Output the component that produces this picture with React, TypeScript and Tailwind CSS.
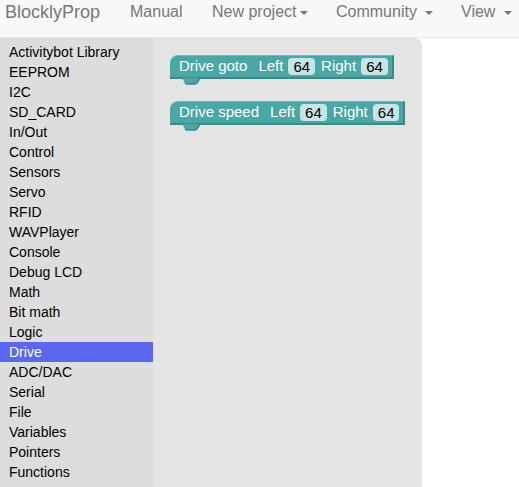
import React from "react";

const items = [
  "Activitybot Library","EEPROM","I2C","SD_CARD","In/Out","Control","Sensors","Servo","RFID","WAVPlayer","Console","Debug LCD","Math","Bit math","Logic","Drive","ADC/DAC","Serial","File","Variables","Pointers","Functions",
];

function Caret() {
  return <span className="inline-block ml-[4px] align-middle w-0 h-0 border-l-[4px] border-r-[4px] border-t-[4px] border-l-transparent border-r-transparent border-t-[#777]" />;
}

function Field({ v }: { v: string }) {
  return (
    <span className="h-[17px] px-[5px] rounded-[4px] bg-[#c7e5e4] text-black flex items-center leading-none">{v}</span>
  );
}

function Block({ name, width }: { name: string; width: number }) {
  return (
    <div className="relative" style={{ width }}>
      <div className="h-[24px] bg-[#49a8a5] rounded-tl-[8px] border-r-[2px] border-b-[2px] border-[#3a8986] border-t border-t-[#6dbab8] flex items-center pl-[9px] text-white text-[15px] whitespace-nowrap">
        <span>{name}</span>
        <span className="ml-[11px]">Left</span>
        <span className="ml-[5px]"><Field v="64" /></span>
        <span className="ml-[6px]">Right</span>
        <span className="ml-[5px]"><Field v="64" /></span>
      </div>
      <svg className="absolute left-[12px] top-[23px]" width="18" height="7" viewBox="0 0 18 7">
        <path d="M0 0 L3 5 Q4 6 6 6 L12 6 Q14 6 15 5 L18 0 Z" fill="#49a8a5" />
        <path d="M3 5 Q4 6 6 6 L12 6 Q14 6 15 5 L18 0" fill="none" stroke="#3a8986" strokeWidth="1.5" />
      </svg>
    </div>
  );
}

export default function App() {
  return (
    <div className="w-[519px] h-[487px] overflow-hidden bg-white" style={{ fontFamily: '"Liberation Sans", Arial, sans-serif' }}>
      <div className="h-[38px] bg-[#f8f8f8] border-b border-[#e7e7e7] flex items-start pt-[2px] text-[#777] text-[16px] leading-[20px] whitespace-nowrap">
        <span className="ml-[5px] text-[18px]">BlocklyProp</span>
        <span className="absolute left-[130px]">Manual</span>
        <span className="absolute left-[212px]">New project<Caret /></span>
        <span className="absolute left-[336px]">Community <Caret /></span>
        <span className="absolute left-[461px]">View <Caret /></span>
      </div>
      <div className="flex h-[449px]">
        <div className="w-[153px] bg-[#dddddd] pt-[4px] text-[14px] text-black">
          {items.map((it) => (
            <div key={it} className={`h-[20px] leading-[20px] pl-[9px] ${it === "Drive" ? "bg-[#5c67ef] text-white" : ""}`}>{it}</div>
          ))}
        </div>
        <div className="w-[269px] bg-[#e4e4e4] rounded-tr-[8px] pl-[17px] pt-[17px] flex flex-col gap-[22px]">
          <Block name="Drive goto" width={224} />
          <Block name="Drive speed" width={235} />
        </div>
      </div>
    </div>
  );
}
